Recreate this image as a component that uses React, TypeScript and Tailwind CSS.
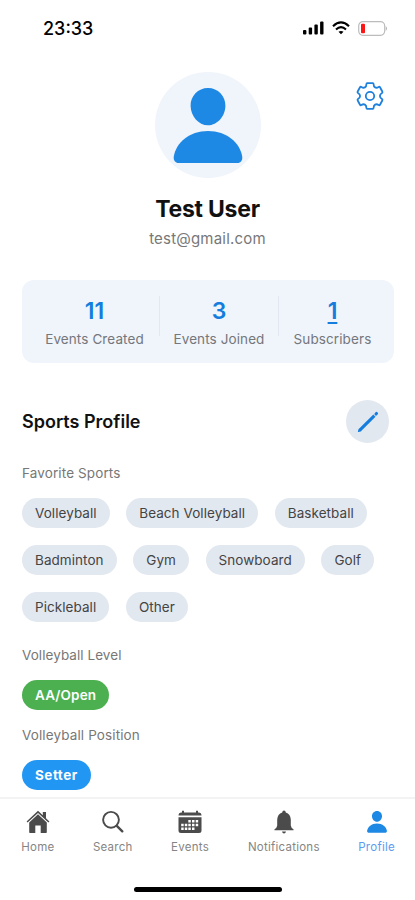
import React from "react"

interface IconProps {
  className?: string
}

interface Stat {
  value: string
  label: string
  cell: string
  underline?: boolean
}

interface Tab {
  label: string
  icon: React.FC<IconProps>
  cell: string
  active?: boolean
}

const PersonIcon: React.FC<IconProps> = ({ className }) => (
  <svg viewBox="0 0 70 76" fill="currentColor" className={className}>
    <path d="M35 0C45 0 52.6 8 52.4 18C52.2 28 44.5 37.3 35 37.3C25.5 37.3 17.8 28 17.6 18C17.4 8 25 0 35 0Z" />
    <path d="M35 43C54 43 67 55 69.2 68.5C69.8 72.5 67.5 75 64.5 75H5.5C2.5 75 .2 72.5 .8 68.5C3 55 16 43 35 43Z" />
  </svg>
)

const GearIcon: React.FC<IconProps> = ({ className }) => (
  <svg viewBox="0 0 28 28" fill="none" stroke="currentColor" strokeWidth="1.8" strokeLinejoin="round" className={className}>
    <path d="M11.2 1.2H16.8Q17.6 1.2 17.6 2.2C17.6 5.4 20 6.600 22.600 5Q23.500 4.500 24 5.300L26.300 9.500Q26.800 10.400 26 11C23.200 12.700 23.200 15.300 26 17Q26.800 17.600 26.300 18.500L24 22.700Q23.500 23.500 22.600 23C20 21.400 17.600 22.600 17.600 25.800Q17.600 26.800 16.800 26.800H11.200Q10.400 26.800 10.400 25.800C10.400 22.600 8 21.400 5.400 23Q4.500 23.500 4 22.700L1.700 18.500Q1.200 17.600 2 17C4.800 15.300 4.800 12.700 2 11Q1.200 10.400 1.700 9.500L4 5.300Q4.500 4.500 5.400 5C8 6.600 10.400 5.400 10.400 2.200Q10.400 1.200 11.200 1.200Z" />
    <circle cx="14" cy="14" r="4.2" />
  </svg>
)

const PencilIcon: React.FC<IconProps> = ({ className }) => (
  <svg viewBox="0 0 22 22" fill="none" stroke="currentColor" className={className}>
    <path d="M2.6 19.4L17.400 4.600" strokeWidth="3.1" />
    <path d="M1.500 20.500L2.200 18.400L3.600 19.800Z" fill="currentColor" strokeWidth="1.2" strokeLinejoin="round" />
    <path d="M19 3L19.500 2.500" strokeWidth="3.1" strokeLinecap="round" />
  </svg>
)

const HomeIcon: React.FC<IconProps> = ({ className }) => (
  <svg viewBox="0 0 24 24" fill="currentColor" className={className}>
    <path d="M12 .8L.6 11.4L1.6 12.6L12 3.1L22.4 12.6L23.4 11.4L20 8.2V2H16.8V5.2Z" />
    <path d="M12 4.3L3.2 12.4V22.3Q3.2 23 3.9 23H9.3V15.5H14.7V23H20.1Q20.8 23 20.8 22.3V12.4Z" />
  </svg>
)

const SearchIcon: React.FC<IconProps> = ({ className }) => (
  <svg viewBox="0 0 24 24" fill="none" stroke="currentColor" className={className}>
    <circle cx="10" cy="9.8" r="7.9" strokeWidth="1.9" />
    <path d="M15.8 15.8L21.3 21.3" strokeWidth="2.4" strokeLinecap="round" />
  </svg>
)

const CalendarIcon: React.FC<IconProps> = ({ className }) => (
  <svg viewBox="0 0 24 24" fill="currentColor" className={className}>
    <path d="M4 .8H6V2.5H18V.8H20V2.5H21Q23.5 2.7 23.5 5V5.6H.5V5Q.5 2.7 3 2.5H4Z" />
    <path
      fillRule="evenodd"
      d="M.5 7.2H23.5V20.5Q23.5 23 21 23H3Q.5 23 .5 20.5ZM10.3 10V12.5H12.8V10ZM14 10V12.5H16.5V10ZM17.7 10V12.5H20.2V10ZM3.2 13.8V16.3H5.7V13.8ZM6.8 13.8V16.3H9.3V13.8ZM10.3 13.8V16.3H12.8V13.8ZM14 13.8V16.3H16.5V13.8ZM17.7 13.8V16.3H20.2V13.8ZM3.2 17.6V20.1H5.7V17.6ZM6.8 17.6V20.1H9.3V17.6ZM10.3 17.6V20.1H12.8V17.6ZM14 17.6V20.1H16.5V17.6Z"
    />
  </svg>
)

const BellIcon: React.FC<IconProps> = ({ className }) => (
  <svg viewBox="0 0 24 24" fill="currentColor" className={className}>
    <path d="M12 .6Q13.6 .6 13.8 2.4Q18.5 4 18.8 9.5V15.5Q19 17.8 21.5 19.2V20.2H2.5V19.2Q5 17.8 5.2 15.5V9.5Q5.5 4 10.2 2.4Q10.4 .6 12 .6Z" />
    <path d="M10 21.6H14Q13.6 23.6 12 23.6Q10.4 23.6 10 21.6Z" />
  </svg>
)

const stats: Stat[] = [
  { value: "11", label: "Events Created", cell: "w-[129px]" },
  { value: "3", label: "Events Joined", cell: "w-[120px] border-x border-[#e2e8f1]" },
  { value: "1", label: "Subscribers", cell: "w-[107px]", underline: true },
]

const sports = [
  "Volleyball",
  "Beach Volleyball",
  "Basketball",
  "Badminton",
  "Gym",
  "Snowboard",
  "Golf",
  "Pickleball",
  "Other",
]

const tabs: Tab[] = [
  { label: "Home", icon: HomeIcon, cell: "w-[74px]" },
  { label: "Search", icon: SearchIcon, cell: "w-[76px]" },
  { label: "Events", icon: CalendarIcon, cell: "w-[79px]" },
  { label: "Notifications", icon: BellIcon, cell: "w-[109px]" },
  { label: "Profile", icon: PersonIcon, cell: "w-[77px]", active: true },
]

const StatusBar: React.FC = () => (
  <div className="flex h-14 shrink-0 items-center justify-between pl-[43px] pr-[27px] text-black">
    <span className="pt-px text-[18px] font-medium leading-6">23:33</span>
    <div className="flex items-center gap-2">
      <svg viewBox="0 0 21 14" fill="currentColor" className="h-[14px] w-[21px]">
        <rect x="0" y="9" width="3.4" height="4.5" rx="1" />
        <rect x="5.7" y="6.5" width="3.4" height="7" rx="1" />
        <rect x="11.4" y="3.6" width="3.4" height="9.9" rx="1" />
        <rect x="17.1" y=".5" width="3.4" height="13" rx="1" />
      </svg>
      <svg viewBox="0 0 18 14" fill="none" stroke="currentColor" strokeWidth="2.1" className="h-[14px] w-[18px]">
        <path d="M1 5.2Q9 -2.4 17 5.2" />
        <path d="M4 8.4Q9 3.8 14 8.4" />
        <path d="M9 13.3L6.5 10.8Q9 9 11.5 10.8Z" fill="currentColor" stroke="none" />
      </svg>
      <svg viewBox="0 0 30 15" className="h-[15px] w-[30px]">
        <rect x=".7" y=".7" width="26" height="13.6" rx="4.2" fill="none" stroke="#bcbcbc" strokeWidth="1.2" />
        <rect x="3" y="2.7" width="4" height="9.6" rx="1" fill="#fb1515" />
        <path d="M27.8 5Q30 7.5 27.8 10Z" fill="#aaaaaa" />
      </svg>
    </div>
  </div>
)

const App: React.FC = () => {
  return (
    <div className="flex h-[900px] w-[415px] flex-col overflow-hidden bg-white font-[Inter,'Liberation_Sans',sans-serif]">
      <StatusBar />

      <main className="min-h-0 flex-1 overflow-hidden px-[22px]">
        <section className="relative flex flex-col items-center pt-4">
          <div className="flex size-[106px] items-center justify-center rounded-full bg-[#f0f4fb] pt-px">
            <PersonIcon className="h-[76px] w-[70px] text-[#1e88e5]" />
          </div>
          <button type="button" className="absolute right-[9px] top-[26px] text-[#1e80dc]">
            <GearIcon className="size-7" />
          </button>
          <h1 className="mt-[15px] text-[23px] font-bold leading-8 tracking-[-0.25px] text-[#111]">Test User</h1>
          <p className="mt-[2px] text-[15px] leading-6 tracking-[0.2px] text-[#777]">test@gmail.com</p>
        </section>

        <section className="mt-[29px] flex h-[83px] w-[372px] rounded-xl bg-[#f0f4fb] px-2 pt-4">
          {stats.map((stat) => (
            <div key={stat.label} className={`flex h-10 flex-col items-center ${stat.cell}`}>
              <span
                className={`text-[23px] font-semibold leading-[30px] text-[#147ddd] ${stat.underline ? "underline decoration-2 underline-offset-[3px]" : ""}`}
              >
                {stat.value}
              </span>
              <span className="mt-[3px] whitespace-nowrap text-[13.5px] leading-5 tracking-[0.1px] text-[#74777c]">{stat.label}</span>
            </div>
          ))}
        </section>

        <section>
          <div className="mt-[37px] flex items-center justify-between pr-1">
            <h2 className="text-[18px] font-semibold leading-6 text-[#111]">Sports Profile</h2>
            <button type="button" className="flex size-[43px] items-center justify-center rounded-full bg-[#e2e8f0] text-[#147ddd]">
              <PencilIcon className="size-[22px]" />
            </button>
          </div>

          <h3 className="mt-5 text-[13.5px] leading-5 tracking-[0.12px] text-[#777]">Favorite Sports</h3>
          <div className="mt-[15px] flex flex-wrap gap-x-[16.6px] gap-y-[17px]">
            {sports.map((sport) => (
              <span
                key={sport}
                className="flex h-[30px] items-center rounded-full bg-[#e2e8f0] px-[13px] text-[13.5px] tracking-[0.06px] text-[#444]"
              >
                {sport}
              </span>
            ))}
          </div>

          <h3 className="mt-[23px] text-[13.5px] leading-5 tracking-[0.06px] text-[#777]">Volleyball Level</h3>
          <span className="mt-[15px] flex h-[30px] w-fit items-center rounded-full bg-[#4caf50] px-[13px] text-[13.5px] font-semibold tracking-[0.15px] text-white">
            AA/Open
          </span>
          <h3 className="mt-[15px] text-[13.5px] leading-5 tracking-[0.12px] text-[#777]">Volleyball Position</h3>
          <span className="mt-[15px] flex h-[30px] w-fit items-center rounded-full bg-[#2196f3] px-[13px] text-[13.5px] font-bold tracking-[0.5px] text-white">
            Setter
          </span>
        </section>
      </main>

      <footer className="h-[103px] shrink-0 border-t-2 border-[#f3f3f3] bg-white">
        <nav className="flex pl-px pt-[11px]">
          {tabs.map(({ label, icon: Icon, cell, active }) => (
            <a key={label} className={`flex flex-col items-center ${cell} ${active ? "text-[#1e88e5]" : "text-[#4b4b4b]"}`}>
              <Icon className={active ? "my-px size-[22px]" : "size-6"} />
              <span className={`mt-[5px] text-[11.5px] leading-4 tracking-[0.25px] ${active ? "text-[#5b9cf0]" : "text-[#858585]"}`}>
                {label}
              </span>
            </a>
          ))}
        </nav>
        <div className="mx-auto mt-8 h-[5px] w-[148px] rounded-full bg-black" />
      </footer>
    </div>
  )
}

export default App
